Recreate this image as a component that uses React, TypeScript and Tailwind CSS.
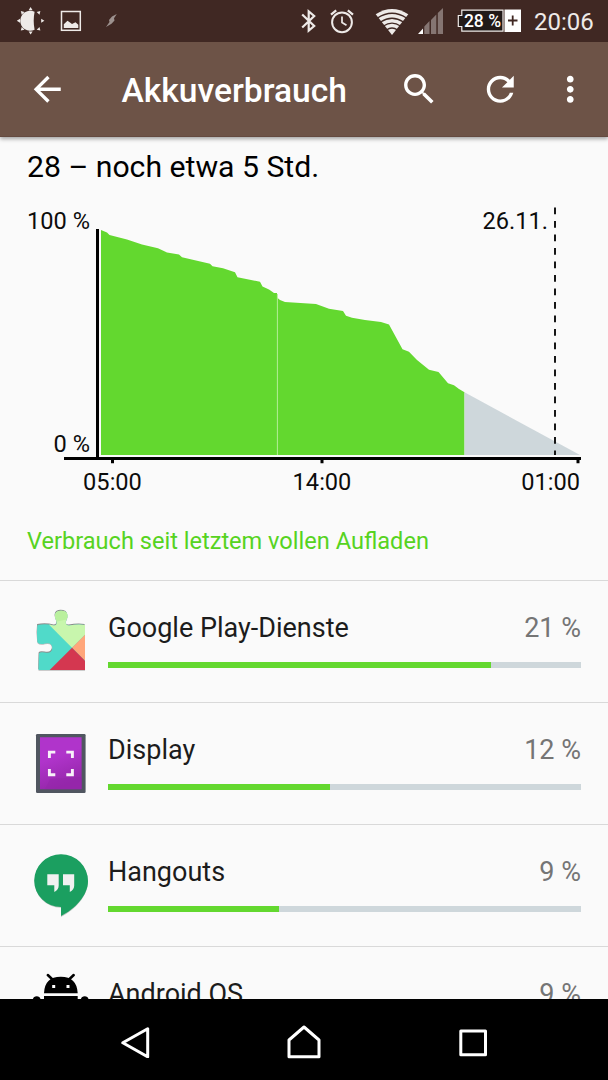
import type { ReactNode } from "react";

const GREEN = "#63d82f";

function SunMoonIcon() {
  const rays = [0, 45, 90, 135, 180, 225, 270, 315];
  return (
    <svg className="ml-4 h-[30px] w-[30px]" viewBox="-14.6 -14.8 30 30" fill="#eeeae8">
      {rays.map((a) => (
        <path key={a} d="M10.6 -2L13.8 0L10.6 2Z" transform={`rotate(${a})`} />
      ))}
      <path d="M4 -9A10 10 0 1 0 4 9Q2.2 0 4 -9Z" />
    </svg>
  );
}

function PictureIcon() {
  return (
    <svg className="ml-[14px] h-[22px] w-[22px]" viewBox="0 0 22 22">
      <rect x="1.5" y="1.500" width="18.800" height="18.800" fill="none" stroke="#eeeae8" strokeWidth="1.500" />
      <path d="M3.800 18V14.200L7.500 10.700L10 12.500L12 14L15.500 12.300L18.300 14.800V18Z" fill="#eeeae8" />
    </svg>
  );
}

function BoltIcon() {
  return (
    <svg className="ml-[24px] h-[14px] w-[12px]" viewBox="0 0 12 14" fill="#9c918e">
      <path d="M10.800 0L6 2.500L3 6L3.500 8L0 13L5.500 9.800L8.500 6.500L8 4.300Z" />
    </svg>
  );
}

function BluetoothIcon() {
  return (
    <svg className="ml-[182px] h-[26px] w-[18px]" viewBox="0 0 18 26" fill="none" stroke="#eeeae8" strokeWidth="2.200">
      <path d="M2.200 6.500L14.200 18L8.700 22.700V3.300L14.200 8L2.200 19.500" />
    </svg>
  );
}

function AlarmIcon() {
  return (
    <svg className="ml-[11px] h-[26px] w-[26px]" viewBox="0 0 26 26" fill="none" stroke="#eeeae8">
      <circle cx="13" cy="14.300" r="9.900" strokeWidth="2" />
      <path d="M13 8.500V14.500L17.500 17.200" strokeWidth="1.700" />
      <path d="M2 6.700L7.200 2.300M24 6.700L18.800 2.300" strokeWidth="2.200" />
    </svg>
  );
}

function WifiIcon() {
  return (
    <svg className="ml-[20px] h-[28px] w-[34px]" viewBox="0 0 34 28">
      <path d="M0.700 7.300Q17 -3.500 33.300 7.300L17 28Z" fill="#eeeae8" />
      <g fill="none" stroke="#402823" strokeWidth="1.400">
        <path d="M2.500 11Q17 1.500 31.500 11" />
        <path d="M5.500 15Q17 7.500 28.500 15" />
        <path d="M8.500 19Q17 13.300 25.500 19" />
        <path d="M11.500 23Q17 19 22.500 23" />
      </g>
    </svg>
  );
}

function SignalIcon() {
  return (
    <svg className="ml-[9px] h-[27px] w-[26px]" viewBox="0 0 26 27">
      <path d="M0 26L5 20.500V26Z" fill="#fff" />
      <path d="M6.300 26V18.500L11.500 13V26ZM13 26V12L18.300 6.500V26ZM19.800 26V5L25 0V26Z" fill="#857572" />
    </svg>
  );
}

function BatteryBadge() {
  return (
    <div className="relative ml-[13px] flex h-[24px] w-[65px] items-center justify-center">
      <svg className="absolute inset-0 h-6 w-[65px]" viewBox="0 0 65 24">
        <path d="M4.800 1.200H46V22.200H4.800V17.500H1.300V6.500H4.800Z" fill="#211a18" stroke="#eeeae8" strokeWidth="1.200" />
        <path d="M47.500 0.500H64V23H47.500Z" fill="#fff" />
        <path d="M51 11.500H60.500M55.700 6.500V16.500" stroke="#402823" strokeWidth="1.800" />
      </svg>
      <span className="relative mr-[14px] whitespace-nowrap text-[17.500px] leading-6 font-medium text-white">28 %</span>
    </div>
  );
}

function ToolIcon({ d, className }: { d: string; className: string }) {
  return (
    <svg viewBox="0 0 24 24" className={`h-[40.500px] w-[40.500px] shrink-0 ${className}`} fill="#fff">
      <path d={d} />
    </svg>
  );
}

function BatteryChart() {
  return (
    <svg className="block h-[320px] w-[608px] shrink-0" viewBox="0 187 608 320" fontSize="23.600" fill="#0c0c0c">
      <path
        fill={GREEN}
        d="M101 455V230L107 232.500L109.500 235L127 239.500L142 244.500L158 248.200L167 252.500L179 254.500L182 257.300L210 263.800L212.500 266.200L223 268.300L235 272.200L237.500 277.200L260 281.700L262.500 286.500L269 289.500L274 293H277V297.500L280 300L285 302L316 304L329 308.700L343 311L346 315.800L352 317.800L365 320L381 322L389 324.500L402.500 349.300L409 351.700L417 360L429 369.700L438.500 372L448 383.300L454 385.200L459 389L464.500 392.300V455Z"
      />
      <path d="M464.500 392.300L580 455H464.500Z" fill="#ced7db" />
      <path d="M277.400 294V455" stroke="#b4ed98" strokeWidth="1" />
      <path d="M555 207.500V455" stroke="#161616" strokeWidth="2" strokeDasharray="6.700 6.800" fill="none" />
      <path d="M96 229H99V457H96ZM64 457H581V460H64ZM111 460H114V463.300H111ZM320.500 460H323.500V463.300H320.500ZM576.500 460H579.500V463.300H576.500Z" fill="#000" />
      <text x="90" y="229" textAnchor="end">100 %</text>
      <text x="90" y="452" textAnchor="end">0 %</text>
      <text x="548" y="229" textAnchor="end">26.11.</text>
      <text x="112.500" y="490" textAnchor="middle">05:00</text>
      <text x="322" y="490" textAnchor="middle">14:00</text>
      <text x="580" y="490" textAnchor="end">01:00</text>
    </svg>
  );
}

const puzzle =
  "M9.500 20Q18 18.500 26 20.500Q29.500 20.500 28.500 16Q25.500 10 28.500 7Q33 4.500 38 7Q41 10 38 16Q37 20.500 41 20.500Q50 19 57 20V65H10.500L11 48.500Q12 46.500 17 47.500Q24 49 24.300 43Q24 37 17 38.500Q12 40 9.500 37.500Q8.500 28 9.500 20Z";

function PlayServicesIcon() {
  return (
    <>
      <defs>
        <clipPath id="puzzle">
          <path d={puzzle} />
        </clipPath>
      </defs>
      <path d={puzzle} fill="#8b8b8b" transform="translate(-0.400 -1)" />
      <path d={puzzle} fill="#bcbcbc" transform="translate(0 0.700)" />
      <g clipPath="url(#puzzle)">
        <path d="M0 0H64V68H0Z" fill="#50dac9" />
        <path d="M21.300 20L44 42.700L64 22.700V0H21.300Z" fill="#c8f6ad" />
        <path d="M26 0H41V14L27 17Z" fill="#baf09e" />
        <path d="M44 42.700L64 22.700V62.700Z" fill="#ffa67a" />
        <path d="M44 42.700L64 62.700V68H18.700Z" fill="#d43750" />
      </g>
    </>
  );
}

function DisplayIcon() {
  return (
    <>
      <defs>
        <linearGradient id="screen" x1="0" y1="0" x2="0.300" y2="1">
          <stop offset="0.450" stopColor="#b034cb" />
          <stop offset="1" stopColor="#9627ab" />
        </linearGradient>
      </defs>
      <rect x="8" y="7" width="49.600" height="59" rx="1.200" fill="#505660" />
      <path d="M12 10.300H53.600V62.300H12Z" fill="url(#screen)" />
      <path d="M22 52L17 62.300H53.600V50Z" fill="#9425aa" opacity="0.500" />
      <path
        d="M21.400 31V25.100H27.300M38.300 25.100H44.400V31M44.400 42V47.700H38.300M27.300 47.700H21.400V42"
        fill="none"
        stroke="#f7f1f8"
        strokeWidth="2.900"
      />
    </>
  );
}

function HangoutsIcon() {
  return (
    <>
      <path d="M33 5.800A26.500 26.500 0 1 0 33 58.800V68C47 61 60 47 60 32.500A27 27 0 0 0 33 5.800Z" fill="#b8c4be" />
      <path d="M33 5.200A26.800 26.400 0 1 0 33 58V67C47 60 60 46.500 60 32A27 26.800 0 0 0 33 5.200Z" fill="#1b9f60" />
      <path d="M19.300 25.300H30.700V36.500Q30.700 40.500 26.300 43V36.200H19.300ZM35 25.300H46.200V36.500Q46.200 40.500 41.800 43V36.200H35Z" fill="#f1f1f1" />
    </>
  );
}

function AndroidIcon() {
  return (
    <>
      <path d="M16 22.300Q16.500 5.700 32.800 5.700Q49 5.700 49.700 22.300ZM16 25H49.700V50H16ZM4.700 30Q4.700 25.300 8.700 25.300Q12.700 25.300 12.700 30V50H4.700ZM52.700 30Q52.700 25.300 56.700 25.300Q60.700 25.300 60.700 30V50H52.700Z" />
      <path d="M19.800 4L24.500 8.500M45.700 4L41 8.500" stroke="#000" strokeWidth="2.500" strokeLinecap="round" />
      <path d="M24.200 14H27.200V17H24.200ZM38.500 14H41.500V17H38.500Z" fill="#fff" />
    </>
  );
}

const apps: { name: string; percent: string; fill: number; icon: ReactNode }[] = [
  { name: "Google Play-Dienste", percent: "21 %", fill: 81, icon: <PlayServicesIcon /> },
  { name: "Display", percent: "12 %", fill: 47, icon: <DisplayIcon /> },
  { name: "Hangouts", percent: "9 %", fill: 36.1, icon: <HangoutsIcon /> },
  { name: "Android OS", percent: "9 %", fill: 35, icon: <AndroidIcon /> },
];

export default function App() {
  return (
    <div className="flex h-[1080px] w-[608px] flex-col overflow-hidden bg-[#fafafa] font-[Roboto,sans-serif]">
      <header className="z-10 shrink-0 shadow-[0_2px_4px_rgba(0,0,0,0.35)]">
        <div className="flex h-[42px] items-center bg-[#402823]">
          <SunMoonIcon />
          <PictureIcon />
          <BoltIcon />
          <BluetoothIcon />
          <AlarmIcon />
          <WifiIcon />
          <SignalIcon />
          <BatteryBadge />
          <span className="ml-[12px] pt-[2px] text-[24px] leading-8 text-[#eeeae8]">20:06</span>
        </div>
        <div className="flex h-[95px] items-center border-b border-[#644a40] bg-[#6d5347]">
          <ToolIcon className="ml-[27px]" d="M20 11H7.830l5.590-5.590L12 4l-8 8 8 8 1.410-1.410L7.830 13H20v-2z" />
          <h1 className="ml-[54px] w-[277px] pt-1 text-[33.600px] leading-10 font-medium text-white">Akkuverbrauch</h1>
          <ToolIcon
            className=""
            d="M15.500 14h-.790l-.280-.270C15.410 12.590 16 11.110 16 9.500 16 5.910 13.090 3 9.500 3S3 5.910 3 9.500 5.910 16 9.500 16c1.610 0 3.090-.590 4.230-1.570l.270.280v.790l5 4.990L20.490 19l-4.990-5zm-6 0C7.010 14 5 11.990 5 9.500S7.010 5 9.500 5 14 7.010 14 9.500 11.990 14 9.500 14z"
          />
          <ToolIcon
            className="ml-[40.500px]"
            d="M17.650 6.350C16.200 4.900 14.210 4 12 4c-4.420 0-7.990 3.580-7.990 8s3.570 8 7.990 8c3.730 0 6.840-2.550 7.730-6h-2.080c-.820 2.330-3.040 4-5.650 4-3.310 0-6-2.690-6-6s2.690-6 6-6c1.660 0 3.140.690 4.220 1.780L13 11h7V4l-2.350 2.350z"
          />
          <ToolIcon
            className="ml-[30px]"
            d="M12 8c1.100 0 2-.900 2-2s-.900-2-2-2-2 .900-2 2 .900 2 2 2zm0 2c-1.100 0-2 .900-2 2s.900 2 2 2 2-.900 2-2-.900-2-2-2zm0 6c-1.100 0-2 .900-2 2s.900 2 2 2 2-.900 2-2-.900-2-2-2z"
          />
        </div>
      </header>

      <main className="flex min-h-0 flex-1 flex-col overflow-hidden pt-[10px]">
        <h2 className="shrink-0 px-[27px] text-[30.200px] leading-10 text-black">28 – noch etwa 5 Std.</h2>
        <BatteryChart />
        <p className="shrink-0 px-[27px] pt-[14px] pb-[19px] text-[23.580px] leading-10 text-[#56d321]">
          Verbrauch seit letztem vollen Aufladen
        </p>
        <ul className="shrink-0">
          {apps.map((app) => (
            <li key={app.name} className="flex h-[122px] border-t border-[#d9d9d9] pr-[27px] pl-7">
              <svg className="mt-6 h-[70px] w-[66px] shrink-0" viewBox="0 0 66 70">
                {app.icon}
              </svg>
              <div className="ml-[14px] flex-1 pt-[31px]">
                <div className="flex justify-between text-[27px] leading-8">
                  <span className="text-[#1c1c1c]">{app.name}</span>
                  <span className="text-[#757575]">{app.percent}</span>
                </div>
                <div className="mt-[18px] h-[6px] bg-[#ced7db]">
                  <div className="h-full bg-[#63d82f]" style={{ width: `${app.fill}%` }} />
                </div>
              </div>
            </li>
          ))}
        </ul>
      </main>

      <nav className="flex h-[81px] shrink-0 items-center justify-between bg-black px-[117px]">
        <svg className="h-9 w-9" viewBox="117 1021.500 36 36" fill="none" stroke="#fff" strokeWidth="3" strokeLinejoin="round">
          <path d="M122.800 1042.300L147.700 1028.200V1056.300Z" />
        </svg>
        <svg className="h-[38px] w-[38px]" viewBox="285 1020.500 38 38" fill="none" stroke="#fff" strokeWidth="3" strokeLinejoin="round">
          <path d="M289 1056.200V1039.500L304 1026.500L319 1039.500V1056.200Z" />
        </svg>
        <svg className="h-9 w-9" viewBox="455 1021.500 36 36" fill="none" stroke="#fff" strokeWidth="3" strokeLinejoin="round">
          <path d="M460.800 1030.500H485.500V1054.300H460.800Z" />
        </svg>
      </nav>
    </div>
  );
}
